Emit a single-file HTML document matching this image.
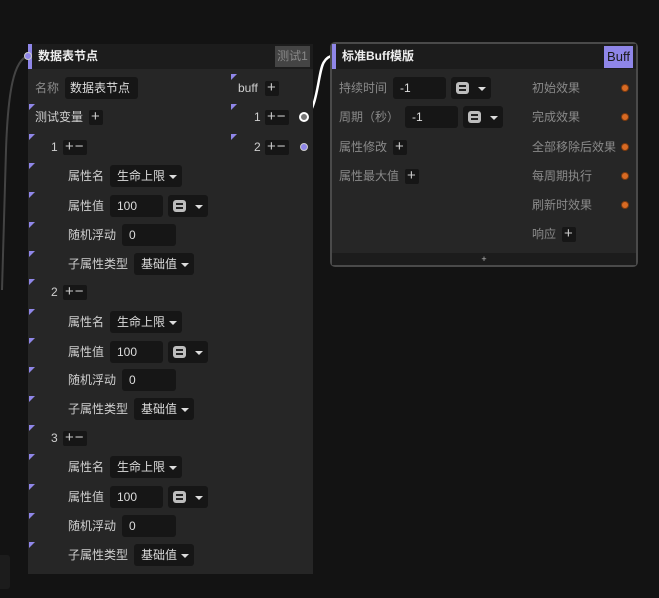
<!DOCTYPE html>
<html><head><meta charset="utf-8"><style>
*{margin:0;padding:0;box-sizing:border-box}
body{width:659px;height:598px;background:#131313;overflow:hidden;position:relative;font-family:"Liberation Sans","Noto Sans CJK SC",sans-serif;font-size:12px;color:#d0d0d0}
.a{position:absolute;white-space:nowrap}
.lbl{position:absolute;line-height:16px;color:#cfcfcf}
.gray{color:#8a8a8a}
.in{position:absolute;background:#161616;border-radius:3px;height:22px;line-height:22px;padding-left:7px;color:#ddd}
.pm{position:absolute;background:#161616;border-radius:2px;height:15px;line-height:14px;font-size:15px;color:#ccc;padding:0 2px;letter-spacing:1px}
.tri{position:absolute;width:0;height:0;border-top:6px solid #8f86e8;border-right:6px solid transparent}
.dd{position:absolute;width:0;height:0;border-left:4px solid transparent;border-right:4px solid transparent;border-top:4px solid #ddd}
.eq{position:absolute;width:13px;height:12px;background:#bdbdbd;border-radius:3px}
.eq:before,.eq:after{content:"";position:absolute;left:3px;width:7px;height:2px;background:#222}
.eq:before{top:3px}.eq:after{top:7px}
.od{position:absolute;width:8px;height:8px;border-radius:50%;background:#d86a23;border:1px solid #7a3a10}
</style></head><body>
<svg class="a" style="left:0;top:0" width="659" height="598">
<path d="M28 56 C14 60 8 90 6 150 L2 290" stroke="#444" stroke-width="2" fill="none"/>
<path d="M305 117 C318 110 318 70 324 62 C327 57 330 56 333 56" stroke="#fff" stroke-width="2.5" fill="none"/>
</svg>
<div class="a" style="left:0;top:555px;width:10px;height:34px;background:#1c1c1c;border-radius:0 3px 3px 0"></div>

<div class="a" style="left:28px;top:44px;width:285px;height:530px;background:#262626"></div>
<div class="a" style="left:28px;top:44px;width:285px;height:25px;background:#1c1c1c"></div>
<div class="a" style="left:28px;top:44px;width:4px;height:25px;background:#8f86e8"></div>
<div class="a" style="left:24px;top:52px;width:8px;height:8px;border-radius:50%;background:#8f86e8;border:1px solid #ccc"></div>
<div class="lbl" style="left:38px;top:48px;font-weight:bold;color:#eee">数据表节点</div>
<div class="a" style="left:275px;top:46px;width:35px;height:21px;background:#444;color:#888;line-height:21px;text-align:center">测试1</div>

<div class="lbl gray" style="left:35px;top:80px">名称</div>
<div class="in" style="left:65px;top:77px;width:73px;padding-left:5px">数据表节点</div>
<div class="lbl" style="left:238px;top:80px">buff</div><div class="pm" style="left:265px;top:81px">+</div>
<div class="tri" style="left:231px;top:74px"></div>
<div class="tri" style="left:231px;top:104px"></div>
<div class="tri" style="left:231px;top:134px"></div>
<div class="lbl" style="left:254px;top:109px">1</div><div class="pm" style="left:265px;top:110px">+−</div>
<div class="a" style="left:299px;top:112px;width:10px;height:10px;border-radius:50%;border:2px solid #fff;background:#777"></div>
<div class="lbl" style="left:254px;top:139px">2</div><div class="pm" style="left:265px;top:140px">+−</div>
<div class="a" style="left:300px;top:143px;width:8px;height:8px;border-radius:50%;background:#8f86e8;border:1px solid #ccc"></div>

<div class="tri" style="left:29px;top:104px"></div>
<div class="lbl" style="left:35px;top:109px">测试变量</div><div class="pm" style="left:89px;top:110px">+</div>

<div class="tri" style="left:29px;top:134px"></div><div class="lbl" style="left:51px;top:139px">1</div><div class="pm" style="left:63px;top:140px">+−</div>
<div class="tri" style="left:29px;top:163px"></div><div class="lbl" style="left:68px;top:168px">属性名</div><div class="in" style="left:110px;top:165px;width:72px">生命上限</div><div class="dd" style="left:169px;top:175px"></div>
<div class="tri" style="left:29px;top:192px"></div><div class="lbl" style="left:68px;top:198px">属性值</div><div class="in" style="left:110px;top:195px;width:53px">100</div><div class="in" style="left:168px;top:195px;width:40px"></div><div class="eq" style="left:173px;top:200px"></div><div class="dd" style="left:195px;top:205px"></div>
<div class="tri" style="left:29px;top:222px"></div><div class="lbl" style="left:68px;top:227px">随机浮动</div><div class="in" style="left:122px;top:224px;width:54px">0</div>
<div class="tri" style="left:29px;top:251px"></div><div class="lbl" style="left:68px;top:256px">子属性类型</div><div class="in" style="left:134px;top:253px;width:60px">基础值</div><div class="dd" style="left:181px;top:263px"></div>

<div class="tri" style="left:29px;top:279px"></div><div class="lbl" style="left:51px;top:284px">2</div><div class="pm" style="left:63px;top:285px">+−</div>
<div class="tri" style="left:29px;top:309px"></div><div class="lbl" style="left:68px;top:314px">属性名</div><div class="in" style="left:110px;top:311px;width:72px">生命上限</div><div class="dd" style="left:169px;top:321px"></div>
<div class="tri" style="left:29px;top:338px"></div><div class="lbl" style="left:68px;top:344px">属性值</div><div class="in" style="left:110px;top:341px;width:53px">100</div><div class="in" style="left:168px;top:341px;width:40px"></div><div class="eq" style="left:173px;top:346px"></div><div class="dd" style="left:195px;top:351px"></div>
<div class="tri" style="left:29px;top:367px"></div><div class="lbl" style="left:68px;top:372px">随机浮动</div><div class="in" style="left:122px;top:369px;width:54px">0</div>
<div class="tri" style="left:29px;top:396px"></div><div class="lbl" style="left:68px;top:401px">子属性类型</div><div class="in" style="left:134px;top:398px;width:60px">基础值</div><div class="dd" style="left:181px;top:408px"></div>

<div class="tri" style="left:29px;top:425px"></div><div class="lbl" style="left:51px;top:430px">3</div><div class="pm" style="left:63px;top:431px">+−</div>
<div class="tri" style="left:29px;top:454px"></div><div class="lbl" style="left:68px;top:459px">属性名</div><div class="in" style="left:110px;top:456px;width:72px">生命上限</div><div class="dd" style="left:169px;top:466px"></div>
<div class="tri" style="left:29px;top:484px"></div><div class="lbl" style="left:68px;top:489px">属性值</div><div class="in" style="left:110px;top:486px;width:53px">100</div><div class="in" style="left:168px;top:486px;width:40px"></div><div class="eq" style="left:173px;top:491px"></div><div class="dd" style="left:195px;top:496px"></div>
<div class="tri" style="left:29px;top:513px"></div><div class="lbl" style="left:68px;top:518px">随机浮动</div><div class="in" style="left:122px;top:515px;width:54px">0</div>
<div class="tri" style="left:29px;top:542px"></div><div class="lbl" style="left:68px;top:547px">子属性类型</div><div class="in" style="left:134px;top:544px;width:60px">基础值</div><div class="dd" style="left:181px;top:554px"></div>

<div class="a" style="left:330px;top:42px;width:308px;height:225px;background:#262626;border:2px solid #4a4a4a;border-radius:5px"></div>
<div class="a" style="left:332px;top:44px;width:304px;height:25px;background:#1c1c1c"></div>
<div class="a" style="left:332px;top:44px;width:4px;height:25px;background:#8f86e8"></div>
<div class="lbl" style="left:342px;top:48px;font-weight:bold;color:#eee">标准Buff模版</div>
<div class="a" style="left:604px;top:46px;width:29px;height:22px;background:#8f86e8;color:#1a1a1a;line-height:22px;text-align:center;font-size:13px">Buff</div>
<div class="a" style="left:332px;top:253px;width:304px;height:12px;background:#1c1c1c;color:#bbb;font-size:9px;line-height:12px;text-align:center">+</div>

<div class="lbl gray" style="left:339px;top:80px">持续时间</div><div class="in" style="left:393px;top:77px;width:53px">-1</div><div class="in" style="left:451px;top:77px;width:40px"></div><div class="eq" style="left:456px;top:82px"></div><div class="dd" style="left:478px;top:87px"></div>
<div class="lbl gray" style="left:339px;top:109px">周期（秒）</div><div class="in" style="left:405px;top:106px;width:53px">-1</div><div class="in" style="left:463px;top:106px;width:40px"></div><div class="eq" style="left:468px;top:111px"></div><div class="dd" style="left:490px;top:116px"></div>
<div class="lbl gray" style="left:339px;top:139px">属性修改</div><div class="pm" style="left:393px;top:140px">+</div>
<div class="lbl gray" style="left:339px;top:168px">属性最大值</div><div class="pm" style="left:405px;top:169px">+</div>

<div class="lbl gray" style="left:532px;top:80px">初始效果</div><div class="od" style="left:621px;top:84px"></div>
<div class="lbl gray" style="left:532px;top:109px">完成效果</div><div class="od" style="left:621px;top:113px"></div>
<div class="lbl gray" style="left:532px;top:139px">全部移除后效果</div><div class="od" style="left:621px;top:143px"></div>
<div class="lbl gray" style="left:532px;top:168px">每周期执行</div><div class="od" style="left:621px;top:172px"></div>
<div class="lbl gray" style="left:532px;top:197px">刷新时效果</div><div class="od" style="left:621px;top:201px"></div>
<div class="lbl gray" style="left:532px;top:226px">响应</div><div class="pm" style="left:562px;top:227px">+</div>
</body></html>
